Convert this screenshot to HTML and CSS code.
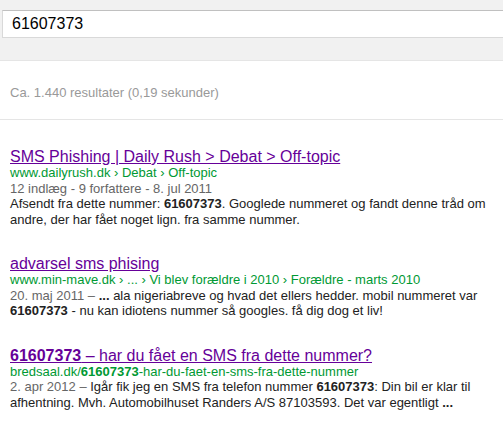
FILE: index.html
```html
<!DOCTYPE html>
<html lang="da">
<head>
  <meta charset="UTF-8" />
  <title>61607373 - Søg</title>
  <link rel="stylesheet" href="styles.css">
</head>
<body>
  <header class="topbar">
    <div class="searchbox">61607373</div>
  </header>

  <div class="stats">Ca. 1.440 resultater (0,19 sekunder)</div>

  <main class="results">
    <div class="result">
      <a class="title" href="#">SMS Phishing | Daily Rush &gt; Debat &gt; Off-topic</a>
      <div class="url">www.dailyrush.dk › Debat › Off-topic</div>
      <div class="meta">12 indlæg - 9 forfattere - 8. jul 2011</div>
      <div class="snippet">Afsendt fra dette nummer: <b>61607373</b>. Googlede nummeret og fandt denne tråd om andre, der har fået noget lign. fra samme nummer.</div>
    </div>

    <div class="result">
      <a class="title" href="#">advarsel sms phising</a>
      <div class="url">www.min-mave.dk › ... › Vi blev forældre i 2010 › Forældre - marts 2010</div>
      <div class="snippet"><span class="meta">20. maj 2011 –</span> <b>...</b> ala nigeriabreve og hvad det ellers hedder. mobil nummeret var <b>61607373</b> - nu kan idiotens nummer så googles. få dig dog et liv!</div>
    </div>

    <div class="result">
      <a class="title" href="#"><b>61607373</b> – har du fået en SMS fra dette nummer?</a>
      <div class="url">bredsaal.dk/<b>61607373</b>-har-du-faet-en-sms-fra-dette-nummer</div>
      <div class="snippet"><span class="meta">2. apr 2012 –</span> Igår fik jeg en SMS fra telefon nummer <b>61607373</b>: Din bil er klar til afhentning. Mvh. Automobilhuset Randers A/S 87103593. Det var egentligt <b>...</b></div>
    </div>
  </main>
</body>
</html>
```

FILE: styles.css
```css
/* Reset */
* {
  box-sizing: border-box;
  margin: 0;
  padding: 0;
}
body {
  font-family: Arial, "Liberation Sans", sans-serif;
  font-size: 13px;
  color: #222;
  background: #fff;
}

/* Search bar */
.topbar {
  height: 61px;
  background: #f1f1f1;
  border-bottom: 1px solid #e5e5e5;
  padding: 10px 0 0 2px;
}
.searchbox {
  height: 28px;
  background: #fff;
  border: 1px solid #d9d9d9;
  border-top-color: #c0c0c0;
  border-right: none;
  padding-left: 9px;
  font-size: 16px;
  line-height: 26px;
  color: #000;
}

/* Result count */
.stats {
  height: 59px;
  padding: 24px 10px 0;
  line-height: 15px;
  color: #999;
  border-bottom: 1px solid #e5e5e5;
}

/* Results */
.results {
  width: 500px;
  padding: 28px 10px 0;
}
.result {
  margin-bottom: 28px;
}
.title {
  display: block;
  font-size: 16px;
  line-height: 17px;
  color: #609;
  text-decoration: underline;
}
.url {
  line-height: 15.5px;
  color: #093;
}
.snippet {
  line-height: 15.5px;
  color: #222;
}
.meta {
  line-height: 15.5px;
  color: #666;
}
```
